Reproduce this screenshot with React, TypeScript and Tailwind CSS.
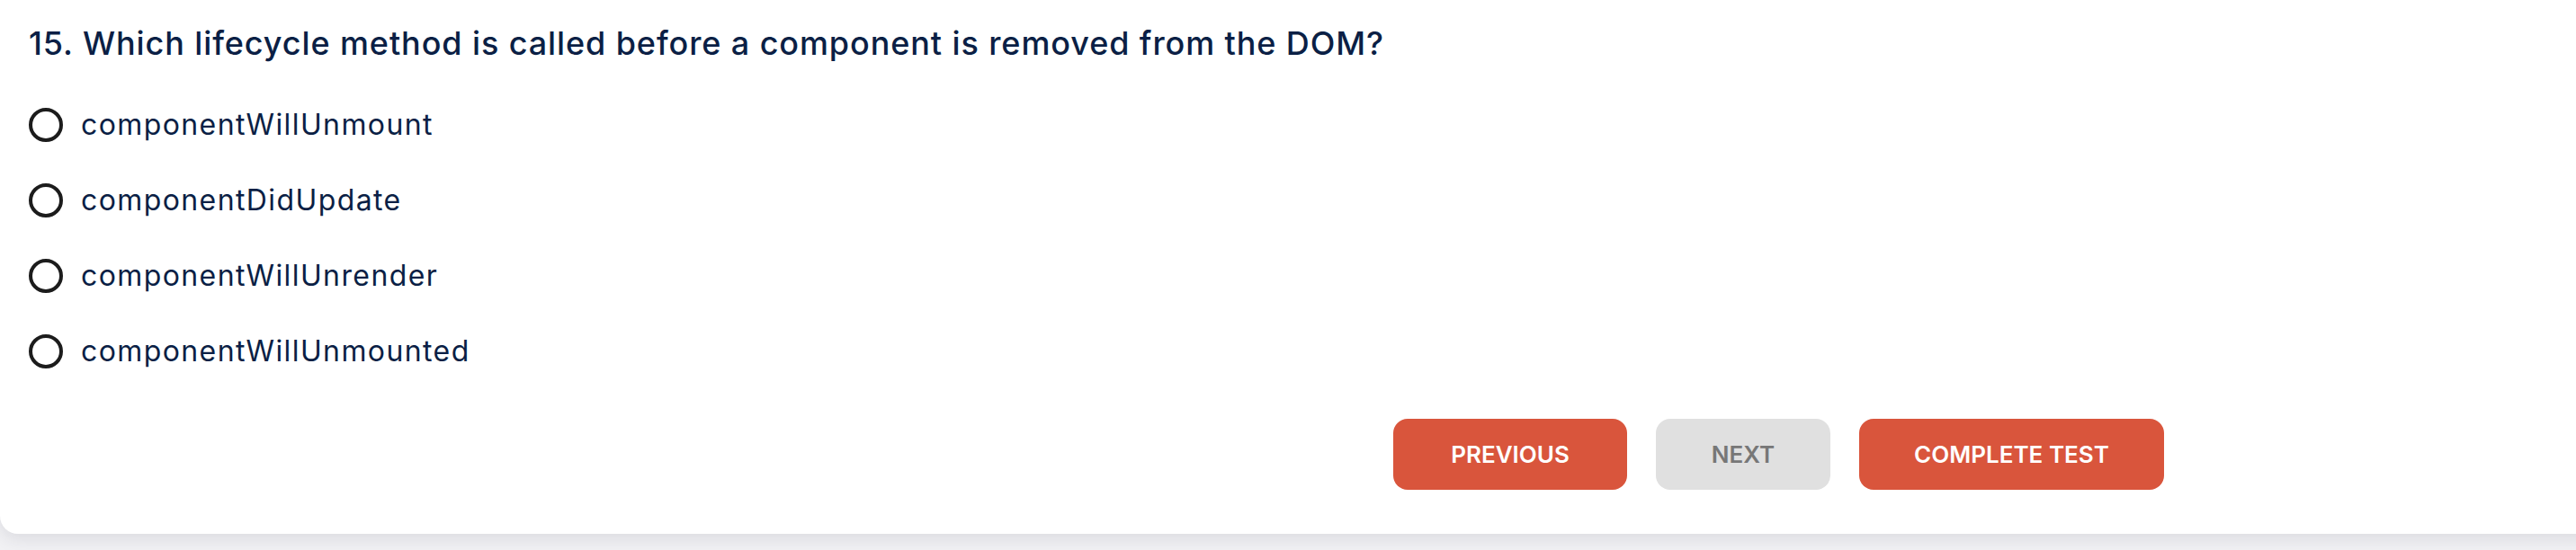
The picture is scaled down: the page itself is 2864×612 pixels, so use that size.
import React from "react";

const options = [
  "componentWillUnmount",
  "componentDidUpdate",
  "componentWillUnrender",
  "componentWillUnmounted",
];

export default function App() {
  return (
    <div className="w-[2864px] h-[612px] bg-[#f1f1f4] overflow-hidden" style={{ fontFamily: "Inter, 'Noto Sans', sans-serif" }}>
      <div className="bg-white rounded-bl-[20px] h-[594px] w-[2900px] shadow-[0_6px_18px_rgba(40,40,60,0.10)] pl-[32px] pt-[21px]">
        <h2 className="text-[36px] leading-[54px] font-medium tracking-[0.9px] text-[#0b1f45] m-0">
          15. Which lifecycle method is called before a component is removed from the DOM?
        </h2>
        <div className="mt-[22px] flex flex-col">
          {options.map((o) => (
            <label key={o} className="h-[84px] flex items-center gap-[20px] cursor-pointer">
              <span className="w-[38px] h-[38px] rounded-full border-[4px] border-[#1c1c1c] shrink-0" />
              <span className="text-[32px] tracking-[1.4px] text-[#0b1f45] leading-none">{o}</span>
            </label>
          ))}
        </div>
        <div className="mt-[33px] flex justify-end pr-[494px] gap-[32px]">
          <button className="w-[260px] h-[79px] rounded-[16px] bg-[#d9553c] text-white text-[26px] font-semibold">PREVIOUS</button>
          <button className="w-[194px] h-[79px] rounded-[16px] bg-[#e0e0e0] text-[#777777] text-[26px] font-semibold">NEXT</button>
          <button className="w-[339px] h-[79px] rounded-[16px] bg-[#d9553c] text-white text-[26px] font-semibold">COMPLETE TEST</button>
        </div>
      </div>
    </div>
  );
}
